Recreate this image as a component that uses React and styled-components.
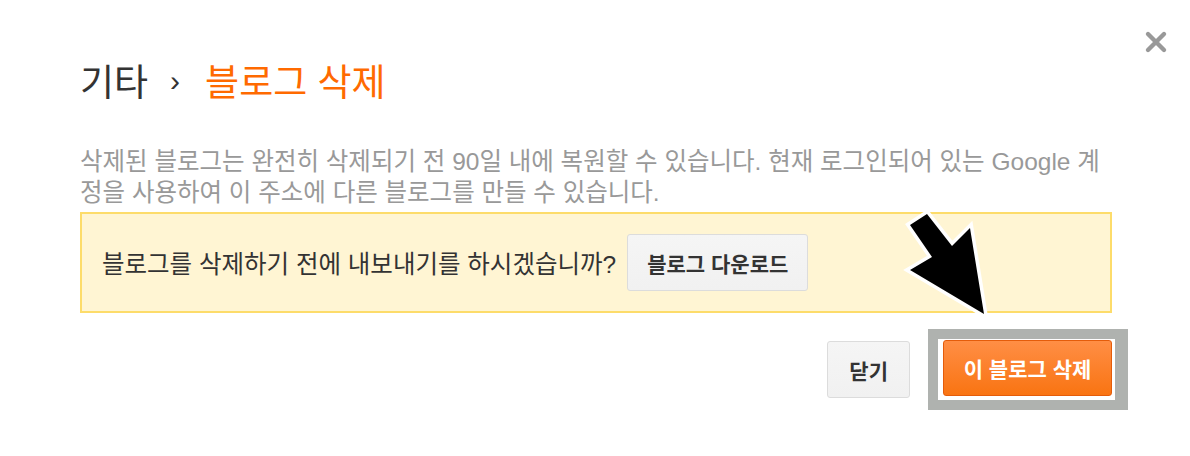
import React from "react";
import styled, { createGlobalStyle } from "styled-components";

const GlobalStyle = createGlobalStyle`
  html, body {
    margin: 0;
    padding: 0;
    background: #fff;
  }
  body {
    font-family: "Liberation Sans", "Noto Sans CJK KR", sans-serif;
  }
`;

const Dialog = styled.div`
  position: relative;
  width: 1190px;
  height: 456px;
  box-sizing: border-box;
  padding: 20px 78px 0 80px;
  background: #fff;
`;

const CloseButton = styled.button`
  position: absolute;
  top: 30px;
  right: 22px;
  width: 24px;
  height: 24px;
  padding: 0;
  border: 0;
  background: none;
  cursor: pointer;
`;

const Title = styled.h1`
  display: flex;
  align-items: center;
  margin: 38px 0 0;
  height: 44px;
  font-size: 37px;
  font-weight: 400;
  color: #333;
`;

const Separator = styled.span`
  font-size: 30px;
  margin: 0 25px 0 22px;
  color: #333;
  position: relative;
  top: 1px;
`;

const Current = styled.span`
  color: #ff6a00;
`;

const Description = styled.p`
  margin: 44px -10px 0 0;
  font-size: 24.5px;
  line-height: 31px;
  color: #999;
`;

const Notice = styled.div`
  display: flex;
  align-items: center;
  gap: 11px;
  margin-top: 4px;
  height: 101px;
  box-sizing: border-box;
  padding: 0 20px;
  background: #fff5d3;
  border: 2px solid #fddc6a;
`;

const NoticeText = styled.span`
  font-size: 24.5px;
  color: #333;
`;

const Button = styled.button`
  height: 57px;
  padding: 0 ${(p) => p.$px || 20}px;
  border-radius: 3px;
  font-family: inherit;
  font-size: 21px;
  font-weight: 700;
  cursor: pointer;
  color: ${(p) => (p.$primary ? "#fff" : "#333")};
  border: 1px solid ${(p) => (p.$primary ? "#e45c0a" : "#dcdcdc")};
  background: ${(p) =>
    p.$primary
      ? "linear-gradient(to bottom, #ff8e45, #f97412)"
      : "linear-gradient(to bottom, #f5f5f5, #f1f1f1)"};
`;

const PrimaryButton = styled(Button)`
  width: 169px;
  height: 56px;
  padding: 0;
`;

const Actions = styled.div`
  display: flex;
  justify-content: flex-end;
  align-items: center;
  gap: 18px;
  margin: 16px -16px 0 0;
`;

const Highlight = styled.div`
  display: flex;
  border: 10px solid #afb2af;
  border-right-width: 13px;
  padding: 1px 3px 4px 5px;
  background: #fff;
`;

const Annotation = styled.svg`
  position: absolute;
  left: 880px;
  top: 200px;
  pointer-events: none;
`;

export default function App() {
  return (
    <>
      <GlobalStyle />
      <Dialog>
        <CloseButton aria-label="닫기">
          <svg width="24" height="24" viewBox="0 0 24 24">
            <path
              d="M4 4 L20 20 M20 4 L4 20"
              stroke="#999"
              strokeWidth="4.4"
              strokeLinecap="round"
            />
          </svg>
        </CloseButton>
        <Title>
          기타<Separator>›</Separator>
          <Current>블로그 삭제</Current>
        </Title>
        <Description>
          삭제된 블로그는 완전히 삭제되기 전 90일 내에 복원할 수 있습니다. 현재
          로그인되어 있는 Google 계정을 사용하여 이 주소에 다른 블로그를 만들 수
          있습니다.
        </Description>
        <Notice>
          <NoticeText>블로그를 삭제하기 전에 내보내기를 하시겠습니까?</NoticeText>
          <Button $px={19}>블로그 다운로드</Button>
        </Notice>
        <Actions>
          <Button $px={21}>닫기</Button>
          <Highlight>
            <PrimaryButton $primary>이 블로그 삭제</PrimaryButton>
          </Highlight>
        </Actions>
        <Annotation width="130" height="130" viewBox="0 0 130 130">
          <polygon
            points="30,25 47,14 72,46 90,28 104,114 30,70 52,57"
            fill="#000"
            stroke="#fff"
            strokeWidth="7"
            strokeLinejoin="miter"
            strokeMiterlimit="10"
            paintOrder="stroke"
          />
        </Annotation>
      </Dialog>
    </>
  );
}
